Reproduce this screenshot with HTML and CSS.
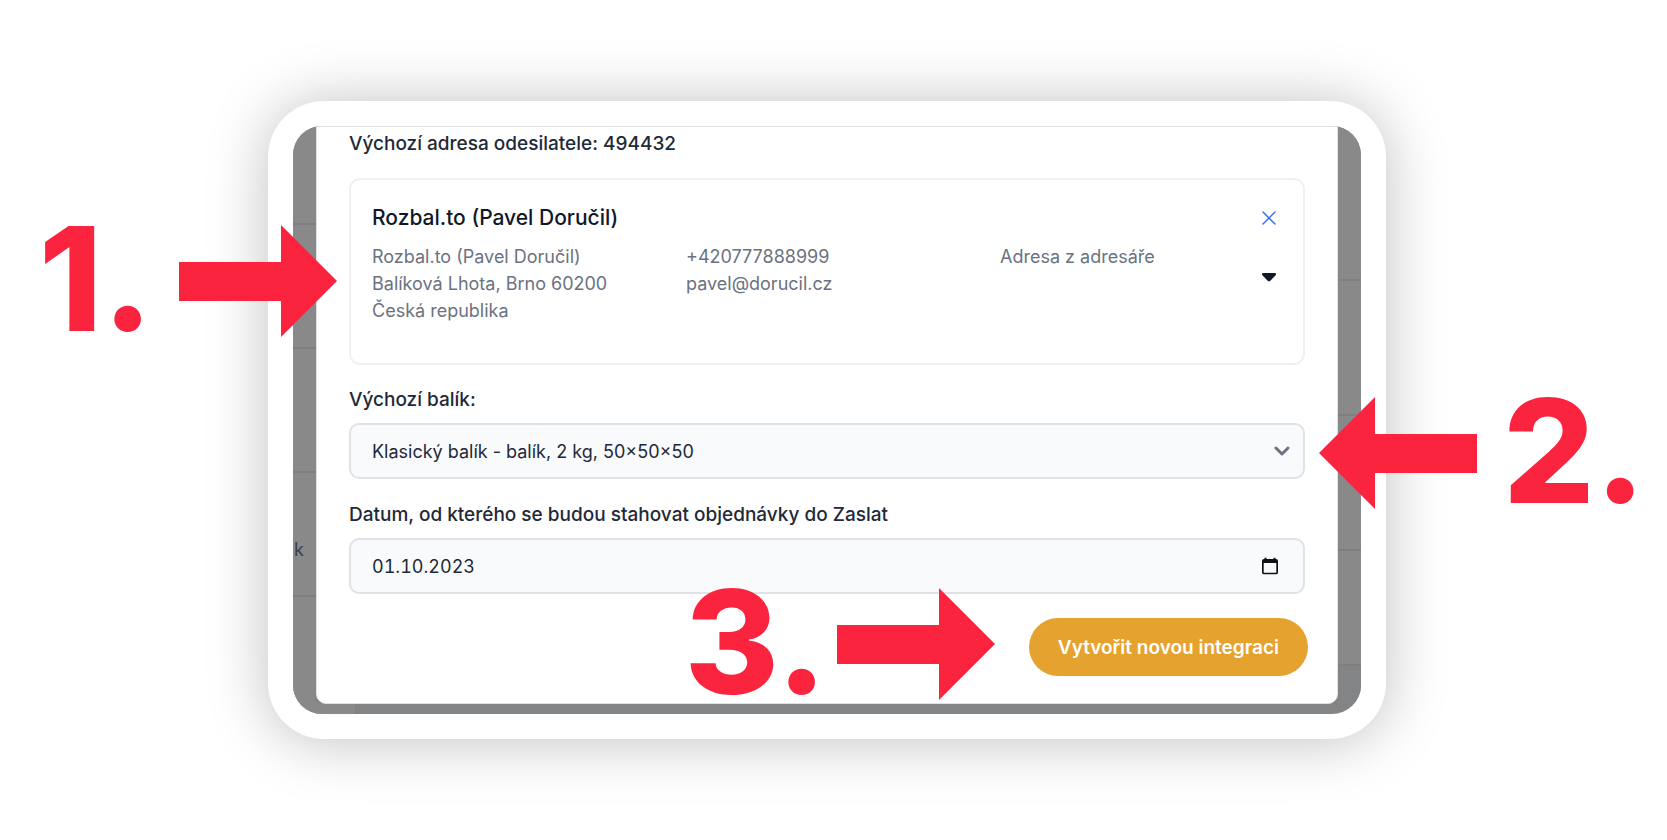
FILE: index.html
```
<!DOCTYPE html>
<html lang="cs">
<head>
    <meta charset="UTF-8">
    <meta name="viewport" content="width=device-width, initial-scale=1.0">
    <title>Nová integrace</title>
    <link rel="stylesheet" href="styles.css">
</head>
<body>
    <main class="stage">
        <div class="frame">
            <div class="screen">
                <!-- zatmavená stránka vlevo -->
                <div class="rail rail-left">
                    <div class="rail-row rail-first"></div>
                    <div class="rail-row"></div>
                    <div class="rail-row"></div>
                    <div class="rail-row rail-text">k</div>
                </div>

                <form class="modal">
                    <div class="modal-body">
                        <p class="label">Výchozí adresa odesilatele: 494432</p>

                        <section class="address">
                            <div class="address-main">
                                <h2>Rozbal.to (Pavel Doručil)</h2>
                                <div class="address-cols">
                                    <p>Rozbal.to (Pavel Doručil)<br>Balíková Lhota, Brno 60200<br>Česká republika</p>
                                    <p>+420777888999<br>pavel@dorucil.cz</p>
                                    <p>Adresa z adresáře</p>
                                </div>
                            </div>
                            <div class="address-actions">
                                <button type="button" class="icon-button" aria-label="Odebrat adresu">
                                    <svg width="14" height="14" viewBox="0 0 14 14"><path d="M1 1l12 12M13 1L1 13" fill="none" stroke="#2f6bf0" stroke-width="1.4" stroke-linecap="round"/></svg>
                                </button>
                                <button type="button" class="icon-button" aria-label="Rozbalit adresy">
                                    <svg width="14" height="9" viewBox="0 0 14 9"><path d="M1.2 0h11.6q1.2 0 1.2 1.2 0 .7-.6 1.2L8.3 7.7Q7 9 5.7 7.7L.6 2.4Q0 1.9 0 1.2 0 0 1.2 0z" fill="#111827"/></svg>
                                </button>
                            </div>
                        </section>

                        <label class="label" for="package">Výchozí balík:</label>
                        <div class="field">
                            <select id="package">
                                <option>Klasický balík - balík, 2 kg, 50×50×50</option>
                            </select>
                            <svg class="field-chevron" width="16" height="10" viewBox="0 0 16 10"><path d="M2 2l6 6 6-6" fill="none" stroke="#6b7280" stroke-width="3" stroke-linecap="round" stroke-linejoin="round"/></svg>
                        </div>

                        <label class="label" for="date-from">Datum, od kterého se budou stahovat objednávky do Zaslat</label>
                        <div class="field">
                            <input type="text" id="date-from" value="01.10.2023">
                            <svg class="field-calendar" width="16" height="17" viewBox="0 0 16 17"><path d="M2.5 0h2v1.5h7V0h2v1.5h.5q2 0 2 2V15q0 2-2 2H2q-2 0-2-2V3.5q0-2 2-2h.5zM1.7 5.500v9.8h12.6V5.5z" fill="#111" fill-rule="evenodd"/></svg>
                        </div>
                    </div>
                    <div class="modal-footer">
                        <button type="submit" class="submit">Vytvořit novou integraci</button>
                    </div>
                </form>

                <!-- zatmavená stránka vpravo -->
                <div class="rail rail-right">
                    <div class="rail-row rail-first"></div>
                    <div class="rail-row"></div>
                    <div class="rail-row"></div>
                    <div class="rail-row rail-last"></div>
                </div>

                <div class="screen-bottom"></div>
            </div>

            <div class="step step-1">
                <span>1.</span>
                <svg width="158" height="112" viewBox="0 0 158 112"><path d="M0 37h102V0l56 56-56 56V76H0z"/></svg>
            </div>
            <div class="step step-2">
                <svg width="158" height="112" viewBox="0 0 158 112"><path d="M158 37H56V0L0 56l56 56V76h102z"/></svg>
                <span>2.</span>
            </div>
            <div class="step step-3">
                <span>3.</span>
                <svg width="158" height="112" viewBox="0 0 158 112"><path d="M0 37h102V0l56 56-56 56V76H0z"/></svg>
            </div>
        </div>
    </main>
</body>
</html>
```
FILE: styles.css
```
* {
    box-sizing: border-box;
}
body {
    margin: 0;
    background: #fff;
    color: #1f2937;
    font-family: Inter, "Liberation Sans", sans-serif;
    font-size: 18px;
}
h2, p {
    margin: 0;
}
.stage {
    padding: 101px 281px 101px 268px;
}
.frame {
    position: relative;
    padding: 25px;
    border-radius: 56px;
    background: #fff;
    box-shadow: 0 2px 60px rgba(0, 0, 0, 0.25);
}

/* obrazovka s oknem */
.screen {
    display: grid;
    grid-template-columns: 23px 1fr 23px;
    overflow: hidden;
    border-radius: 29px;
    background: #838486;
}
.rail {
    display: flex;
    flex-direction: column;
    background: #898989;
}
.rail-row {
    height: 124px;
    border-bottom: 2px solid #7f7f7f;
}
.rail-left .rail-first {
    height: 99px;
}
.rail-right .rail-row {
    height: 135px;
}
.rail-right .rail-first {
    height: 155px;
}
.rail-right .rail-last {
    height: 115px;
}
.rail-right {
    background: linear-gradient(#898989 540px, #838486 540px);
}
.rail-text {
    display: flex;
    align-items: center;
    padding: 30px 0 0 1px;
    color: #374151;
}
.screen-bottom {
    grid-column: 1 / 3;
    width: 63px;
    height: 10px;
    background: #898989;
    border-right: 1px solid #7f7f7f;
}

.modal {
    border: 1px solid #e0e1e3;
    border-radius: 0 0 10px 10px;
    background: #fff;
}
.modal-body {
    padding: 3px 32px 0;
}
.modal-footer {
    display: flex;
    justify-content: flex-end;
    padding: 24px 29px 27px;
}
.label {
    display: block;
    color: #1f2937;
    font-size: 19px;
    font-weight: 500;
    line-height: 28px;
}

/* karta adresy */
.address {
    display: flex;
    margin: 20px 0 21px;
    padding: 24px 21px 39px;
    border: 2px solid #eff0f3;
    border-radius: 11px;
}
.address-main {
    flex: 1;
}
.address h2 {
    color: #111827;
    font-size: 21px;
    font-weight: 500;
    line-height: 28px;
}
.address-cols {
    display: grid;
    grid-template-columns: 314px 314px 1fr;
    margin-top: 11px;
    color: #6b7280;
    line-height: 27px;
}
.address-actions {
    display: flex;
    flex-direction: column;
    gap: 39px;
    padding: 4px 6px 0 0;
}
.icon-button {
    display: grid;
    place-items: center;
    height: 20px;
    padding: 0;
    border: 0;
    background: none;
    cursor: pointer;
}

.field {
    position: relative;
    margin: 9px 0 22px;
}
.field select,
.field input {
    display: block;
    width: 100%;
    height: 56px;
    padding: 0 21px;
    border: 2px solid #dfe2e7;
    border-radius: 10px;
    background: #f9fafc;
    color: #1f2937;
    font: inherit;
    appearance: none;
}
.field input {
    font-variant-numeric: tabular-nums;
}
.field-chevron,
.field-calendar {
    position: absolute;
    top: 50%;
    right: 15px;
    transform: translateY(-50%);
    pointer-events: none;
}
.field-calendar {
    right: 27px;
}
.modal-body .field:last-child {
    margin-bottom: 0;
}
.submit {
    height: 58px;
    padding: 0 29px;
    border: 0;
    border-radius: 29px;
    background: #e6a22e;
    color: #fff;
    font: inherit;
    font-size: 19px;
    font-weight: 600;
    cursor: pointer;
}

/* červené kroky */
.step {
    position: absolute;
    display: flex;
    align-items: center;
    gap: 26px;
    color: #fb243f;
    font-size: 144px;
    font-weight: 800;
    line-height: 112px;
}
.step span {
    padding-bottom: 4px;
}
.step svg {
    fill: currentColor;
}
.step-1 {
    top: 122px;
    right: 1049px;
}
.step-2 {
    top: 294px;
    left: 1051px;
}
.step-3 {
    right: 391px;
    bottom: 37px;
    gap: 10px;
}
```
